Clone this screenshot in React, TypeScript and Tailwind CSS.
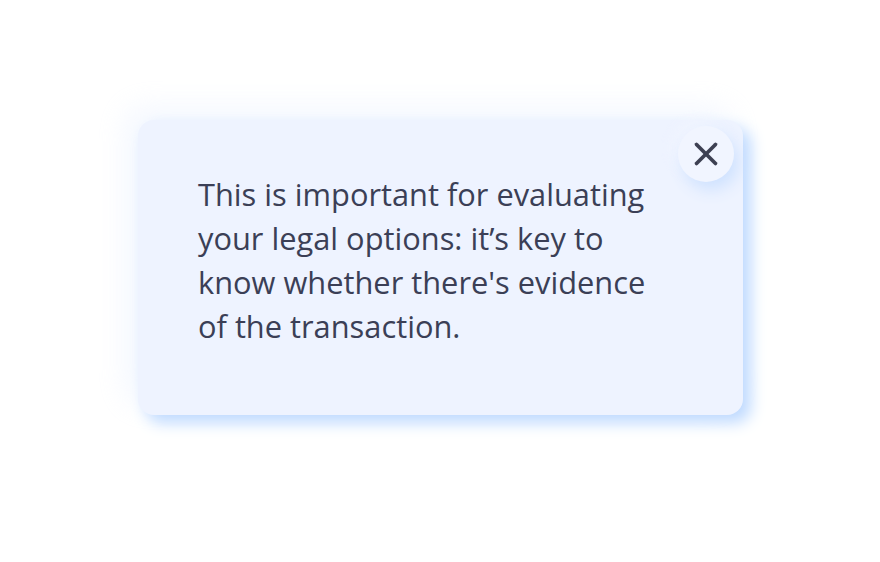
import { X } from "lucide-react";

export default function App() {
  return (
    <div className="w-[880px] h-[562px] bg-white pt-[120px] pl-[138px] overflow-hidden">
      <div className="relative w-[605px] h-[295px] rounded-[16px] bg-[#eef3ff] pt-[52px] pl-[60px] shadow-[8px_8px_15px_#bfdaff,-12px_-12px_30px_rgba(225,235,255,0.4)]">
        <p className="w-[470px] text-[30.8px] leading-[44px] text-[#3b3f56] font-['Open_Sans',sans-serif]">
          This is important for evaluating your legal options: it’s key to know whether there's evidence of the transaction.
        </p>
        <button className="absolute top-[6px] right-[9px] w-[56px] h-[56px] rounded-full bg-[#f1f5ff] flex items-center justify-center shadow-[5px_8px_16px_#cfe2ff,-6px_-6px_14px_rgba(241,245,255,0.8)]">
          <X className="w-[38px] h-[38px] text-[#3d4052]" strokeWidth={2.3} />
        </button>
      </div>
    </div>
  );
}
